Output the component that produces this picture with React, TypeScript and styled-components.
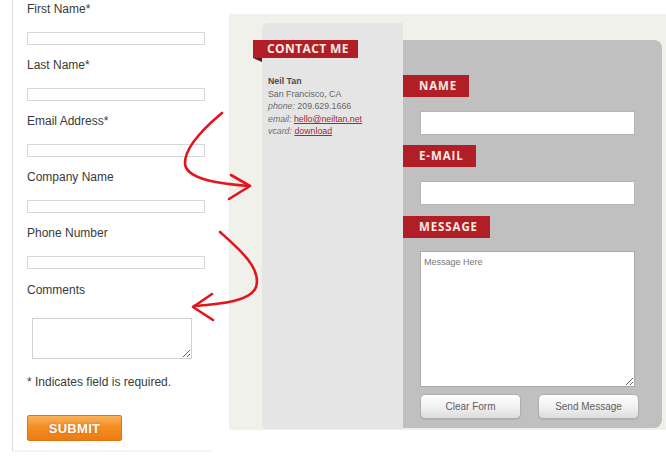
import React from "react";
import styled, { createGlobalStyle } from "styled-components";

const GlobalStyle = createGlobalStyle`
  html, body { margin: 0; padding: 0; background: #ffffff; }
  body { font-family: "Liberation Sans", Arial, sans-serif; }
  * { box-sizing: border-box; }
`;

const Page = styled.div`
  position: relative;
  width: 666px;
  height: 456px;
  overflow: hidden;
  display: flex;
  align-items: flex-start;
`;

const LeftColumn = styled.div`
  margin-left: 12px;
  width: 201px;
  height: 452px;
  border-left: 1px solid #dcdcdc;
  border-bottom: 2px solid #f6f6f6;
  padding: 2px 0 0 14px;
  display: flex;
  flex-direction: column;
`;

const Field = styled.div`
  display: flex;
  flex-direction: column;
  margin-bottom: 13px;
`;

const Label = styled.label<{ $gap?: number; $top?: number }>`
  font-size: 12px;
  line-height: 14px;
  color: #3a3a3a;
  margin-top: ${(p) => p.$top ?? 0}px;
  margin-bottom: ${(p) => p.$gap ?? 16}px;
`;

const SmallInput = styled.input`
  width: 178px;
  height: 13px;
  border: 1px solid #d6d6d6;
  background: #fff;
  padding: 0;
  margin: 0;
`;

const SmallArea = styled.textarea`
  width: 160px;
  height: 41px;
  margin: 0 0 0 5px;
  border: 1px solid #d0d0d0;
  padding: 0;
  background: #fff;
`;

const Note = styled.p`
  margin: 16px 0 0 0;
  font-size: 12px;
  line-height: 14px;
  color: #3a3a3a;
`;

const SubmitButton = styled.button`
  margin-top: 26px;
  width: 95px;
  height: 26px;
  border: 1px solid #dd7512;
  border-radius: 2px;
  background: linear-gradient(#fbb25a 0%, #f48f25 45%, #ec7b12 100%);
  color: #fff;
  font-family: "Liberation Sans", Arial, sans-serif;
  font-weight: bold;
  font-size: 13px;
  letter-spacing: 0.3px;
  text-shadow: 0 0 2px rgba(150, 70, 0, 0.6);
  padding: 0;
  text-align: center;
`;

const RightArea = styled.div`
  margin: 14px 0 0 16px;
  width: 437px;
  height: 416px;
  flex-shrink: 0;
  background: #f1f1ec;
  padding: 9px 0 0 33px;
  display: flex;
  align-items: flex-start;
`;

const InfoCard = styled.div`
  width: 141px;
  height: 406px;
  background: #e5e5e5;
  border-radius: 6px 0 0 4px;
  padding-top: 17px;
  display: flex;
  flex-direction: column;
`;

const Ribbon = styled.div`
  position: relative;
  margin-left: -9px;
  width: 105px;
  height: 18px;
  background: #b21e26;
  color: #f8ece4;
  font-family: "Open Sans", Lato, sans-serif;
  font-weight: 700;
  font-size: 12px;
  letter-spacing: 0.4px;
  line-height: 18px;
  padding-left: 14px;
  &::after {
    content: "";
    position: absolute;
    left: 0;
    bottom: -4px;
    border-top: 4px solid #6e0f13;
    border-left: 9px solid transparent;
  }
`;

const Info = styled.div`
  margin: 17px 0 0 6px;
  font-family: "Liberation Sans", Arial, sans-serif;
  font-size: 8.8px;
  line-height: 12.6px;
  color: #666;
`;

const InfoName = styled.div`
  font-weight: bold;
  color: #4a4a4a;
  font-size: 8.8px;
`;

const InfoKey = styled.em`
  font-style: italic;
  color: #6f6f6f;
`;

const InfoLink = styled.a`
  color: #a8282c;
  text-decoration: underline;
`;

const FormPanel = styled.div`
  margin-top: 17px;
  width: 259px;
  height: 388px;
  background: #c0c0c0;
  border-radius: 0 8px 8px 0;
  padding-top: 35px;
  display: flex;
  flex-direction: column;
  align-items: flex-start;
`;

const Tag = styled.div`
  height: 22px;
  background: #b21e26;
  color: #f8ece4;
  font-family: "Open Sans", Lato, sans-serif;
  font-weight: 700;
  font-size: 11.5px;
  letter-spacing: 0.9px;
  line-height: 22px;
  padding: 0 12px 0 16px;
`;

const BigInput = styled.input<{ $after?: number }>`
  margin: 14px 0 ${(p) => p.$after ?? 10}px 17px;
  width: 215px;
  height: 24px;
  border: 1px solid #b4b4b4;
  background: #fff;
  padding: 0;
`;

const BigArea = styled.textarea`
  margin: 13px 0 0 17px;
  width: 215px;
  height: 136px;
  border: 1px solid #aaaaaa;
  background: #fff;
  padding: 5px 3px;
  font-family: "Liberation Sans", Arial, sans-serif;
  font-size: 9px;
  color: #666;
  &::placeholder { color: #777; }
`;

const ButtonRow = styled.div`
  margin: 7px 0 0 17px;
  display: flex;
  gap: 17px;
`;

const GrayButton = styled.button<{ $w: number }>`
  width: ${(p) => p.$w}px;
  height: 25px;
  border: 1px solid #b0b0b0;
  border-radius: 5px;
  background: linear-gradient(#ffffff 0%, #f2f2f2 50%, #dcdcdc 100%);
  color: #5e5e5e;
  font-family: "Liberation Sans", Arial, sans-serif;
  font-size: 10px;
  padding: 0;
  box-shadow: 0 1px 1px rgba(0, 0, 0, 0.1);
`;

const Arrows = styled.svg`
  position: absolute;
  left: 0;
  top: 0;
  pointer-events: none;
`;

const fields = ["First Name*", "Last Name*", "Email Address*", "Company Name", "Phone Number"];

export default function App() {
  return (
    <>
      <GlobalStyle />
      <Page>
        <LeftColumn>
          {fields.map((f) => (
            <Field key={f}>
              <Label>{f}</Label>
              <SmallInput type="text" />
            </Field>
          ))}
          <Label $gap={21} $top={1}>Comments</Label>
          <SmallArea />
          <Note>* Indicates field is required.</Note>
          <SubmitButton>SUBMIT</SubmitButton>
        </LeftColumn>
        <RightArea>
          <InfoCard>
            <Ribbon>CONTACT ME</Ribbon>
            <Info>
              <InfoName>Neil Tan</InfoName>
              <div>San Francisco, CA</div>
              <div>
                <InfoKey>phone:</InfoKey> 209.629.1666
              </div>
              <div>
                <InfoKey>email:</InfoKey> <InfoLink>hello@neiltan.net</InfoLink>
              </div>
              <div>
                <InfoKey>vcard:</InfoKey> <InfoLink>download</InfoLink>
              </div>
            </Info>
          </InfoCard>
          <FormPanel>
            <Tag>NAME</Tag>
            <BigInput type="text" />
            <Tag>E-MAIL</Tag>
            <BigInput type="text" $after={11} />
            <Tag>MESSAGE</Tag>
            <BigArea placeholder="Message Here" />
            <ButtonRow>
              <GrayButton $w={101}>Clear Form</GrayButton>
              <GrayButton $w={101}>Send Message</GrayButton>
            </ButtonRow>
          </FormPanel>
        </RightArea>
        <Arrows width="666" height="456" viewBox="0 0 666 456">
          <g fill="none" stroke="#e3141c" strokeWidth="2.6" strokeLinecap="round" strokeLinejoin="round">
            <path d="M222,113 C204,128 184,148 185,164 C187,180 222,184 249,186" />
            <path d="M231,175 L250,186 L229,199" />
            <path d="M220,232 C238,248 262,268 256,287 C251,301 222,304 194,306" />
            <path d="M212,294 L193,307 L213,320" />
          </g>
        </Arrows>
      </Page>
    </>
  );
}
